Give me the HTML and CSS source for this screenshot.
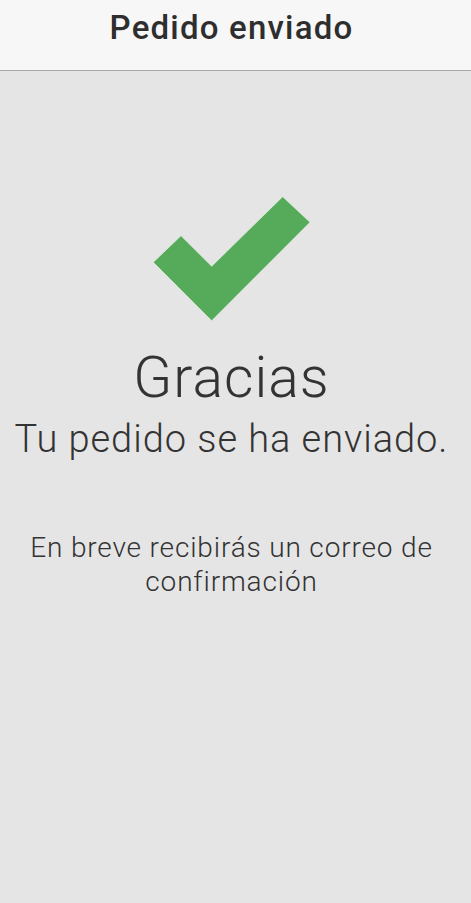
FILE: index.html
```html
<!DOCTYPE html>
<html lang="es">
<head>
<meta charset="utf-8">
<title>Pedido enviado</title>
<link rel="stylesheet" href="styles.css">
</head>
<body>
<header class="topbar">
  <h1 class="topbar-title">Pedido enviado</h1>
</header>
<main class="content">
  <svg class="check" width="158" height="126" viewBox="0 0 158 126" aria-hidden="true">
    <polygon points="0.3,66.3 28,39.7 58.7,70.3 129.7,0.7 157,26.3 58.7,124.7" fill="#56ab5a" stroke="#e9f3e8" stroke-width="0.6"/>
  </svg>
  <h2 class="thanks">Gracias</h2>
  <p class="subtitle">Tu pedido se ha enviado.</p>
  <p class="note">En breve recibirás un correo de confirmación</p>
</main>
</body>
</html>
```
FILE: styles.css
```css
html, body {
  margin: 0;
  padding: 0;
}
body {
  background: #e5e5e5;
  font-family: Roboto, "Liberation Sans", Arial, sans-serif;
  color: #333333;
  min-height: 903px;
}
.topbar {
  background: #f7f7f7;
  border-bottom: 1px solid #a9a9a9;
  height: 71px;
  box-sizing: border-box;
  padding-top: 8px;
  padding-right: 8px;
}
.topbar-title {
  margin: 0;
  text-align: center;
  font-size: 33px;
  line-height: 40px;
  font-weight: 500;
  letter-spacing: 1.2px;
  color: #2e2e2e;
}
.content {
  display: flex;
  flex-direction: column;
  align-items: center;
  padding-right: 8px;
  text-align: center;
}
.check {
  display: block;
  margin-top: 125px;
}
.thanks {
  margin: 24px 0 0;
  font-size: 57px;
  line-height: 64px;
  font-weight: 300;
  letter-spacing: 1px;
}
.subtitle {
  margin: 7px 0 0;
  font-size: 38px;
  line-height: 44px;
  font-weight: 300;
  letter-spacing: 0.95px;
}
.note {
  margin: 70px 0 0;
  font-size: 28px;
  line-height: 34px;
  font-weight: 300;
  letter-spacing: 0.85px;
  width: 430px;
}
```
